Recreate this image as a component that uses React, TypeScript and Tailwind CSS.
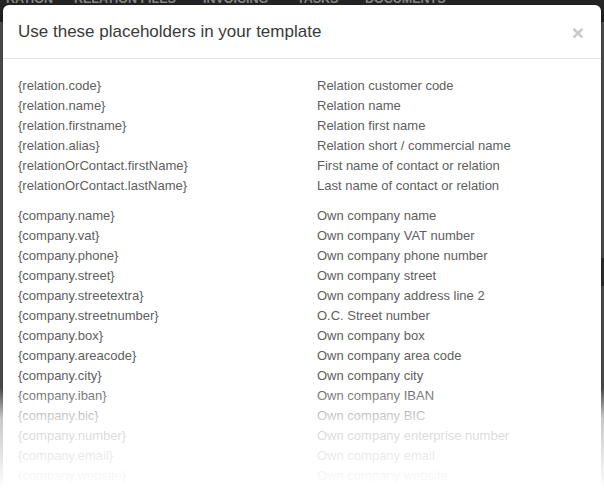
import React from "react";

const group1: [string, string][] = [
  ["{relation.code}", "Relation customer code"],
  ["{relation.name}", "Relation name"],
  ["{relation.firstname}", "Relation first name"],
  ["{relation.alias}", "Relation short / commercial name"],
  ["{relationOrContact.firstName}", "First name of contact or relation"],
  ["{relationOrContact.lastName}", "Last name of contact or relation"],
];

const group2: [string, string][] = [
  ["{company.name}", "Own company name"],
  ["{company.vat}", "Own company VAT number"],
  ["{company.phone}", "Own company phone number"],
  ["{company.street}", "Own company street"],
  ["{company.streetextra}", "Own company address line 2"],
  ["{company.streetnumber}", "O.C. Street number"],
  ["{company.box}", "Own company box"],
  ["{company.areacode}", "Own company area code"],
  ["{company.city}", "Own company city"],
  ["{company.iban}", "Own company IBAN"],
  ["{company.bic}", "Own company BIC"],
  ["{company.number}", "Own company enterprise number"],
  ["{company.email}", "Own company email"],
  ["{company.website}", "Own company website"],
  ["{company.logo}", "Own company logo"],
];

function Rows({ rows }: { rows: [string, string][] }) {
  return (
    <div className="flex flex-col">
      {rows.map(([k, v]) => (
        <div key={k} className="grid grid-cols-[299px_1fr] h-[20px] leading-[20px]">
          <span>{k}</span>
          <span>{v}</span>
        </div>
      ))}
    </div>
  );
}

export default function App() {
  return (
    <div
      className="relative w-[604px] h-[489px] overflow-hidden bg-[#575757]"
      style={{ fontFamily: '"Liberation Sans", Arial, sans-serif' }}
    >
      <div className="h-[22px] bg-[#252525] grid grid-cols-[68px_129px_94px_68px_auto] pl-[6px] text-[#8a8a8a] text-[12.5px] font-bold uppercase leading-none">
        <span className="-mt-[7px]">ration</span>
        <span className="-mt-[7px]">relation files</span>
        <span className="-mt-[7px]">invoicing</span>
        <span className="-mt-[7px]">tasks</span>
        <span className="-mt-[7px]">documents</span>
      </div>
      <div className="absolute right-0 top-[258px] w-[3px] h-[28px] bg-[#333]" />

      <div className="absolute left-[3px] top-[5px] w-[598px] h-[520px] bg-white rounded-[6px] shadow-[0_3px_9px_rgba(0,0,0,0.5)]">
        <div className="flex items-center justify-between h-[54px] pt-[1px] px-[15px] border-b border-[#e5e5e5]">
          <h4 className="text-[17px] text-[#3a3a3a] leading-[24px]">
            Use these placeholders in your template
          </h4>
          <span className="text-[21px] font-bold text-[#c8c8c8] leading-none mr-[2px]">×</span>
        </div>
        <div className="px-[15px] pt-[17px] text-[13px] text-[#5e5e5e] flex flex-col gap-[10px]">
          <Rows rows={group1} />
          <Rows rows={group2} />
        </div>
      </div>

      <div className="absolute left-0 right-0 top-[388px] bottom-0 bg-gradient-to-b from-white/0 via-white/70 via-30% to-white" />
    </div>
  );
}
